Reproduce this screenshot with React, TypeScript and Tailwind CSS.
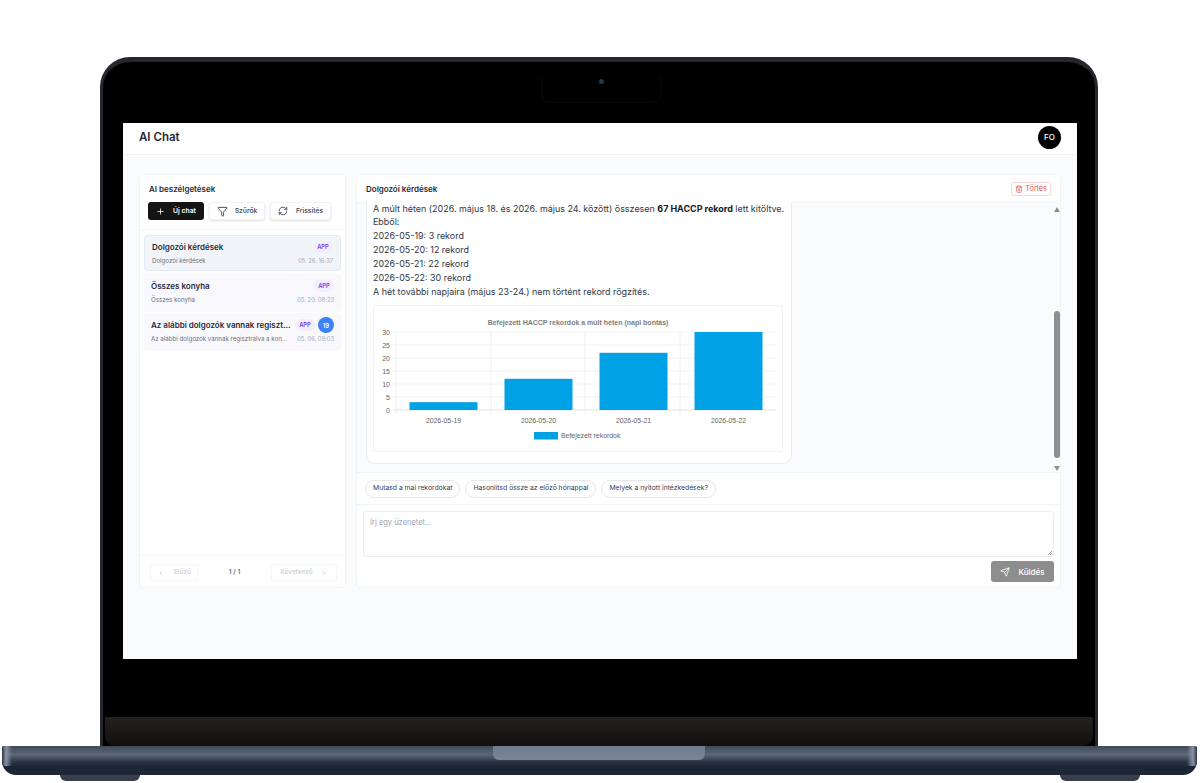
import { ChevronLeft, ChevronRight, Filter, Plus, RefreshCw, Send, Trash2 } from 'lucide-react';

const font = { fontFamily: 'Inter, "Liberation Sans", sans-serif' };

const conversations = [
  { title: 'Dolgozói kérdések', preview: 'Dolgozói kérdések', date: '05. 26. 16:37', active: true },
  { title: 'Összes konyha', preview: 'Összes konyha', date: '05. 20. 08:23' },
  {
    title: 'Az alábbi dolgozók vannak regiszt...',
    preview: 'Az alábbi dolgozók vannak regisztrálva a kon...',
    date: '05. 06. 09:03',
    count: 19,
  },
];

const bars = [
  { label: '2026-05-19', value: 3, x: 35.5 },
  { label: '2026-05-20', value: 12, x: 130.5 },
  { label: '2026-05-21', value: 22, x: 225.5 },
  { label: '2026-05-22', value: 30, x: 320.5 },
];

const suggestions = ['Mutasd a mai rekordokat', 'Hasonlítsd össze az előző hónappal', 'Melyek a nyitott intézkedések?'];

function HaccpChart() {
  const top = 26;
  const bottom = 104;
  const y = (v: number) => bottom - (v / 30) * (bottom - top);
  return (
    <svg width="408" height="145" viewBox="0 0 408 145" className="block">
      <g fontFamily='"Liberation Sans", Arial, sans-serif'>
        <text x="204" y="19" textAnchor="middle" fontSize="7" fontWeight="700" fill="#7d7d7d">
          Befejezett HACCP rekordok a múlt héten (napi bontás)
        </text>
        {[0, 5, 10, 15, 20, 25, 30].map((v) => (
          <g key={v}>
            <line x1="19" x2="402" y1={y(v)} y2={y(v)} stroke={v === 0 ? '#dcdcdc' : '#ececec'} strokeWidth="0.8" />
            <text x="16" y={y(v) + 2.6} textAnchor="end" fontSize="7" fill="#666">
              {v}
            </text>
          </g>
        ))}
        {[22, 117, 211, 306].map((x) => (
          <line key={x} x1={x} x2={x} y1={top} y2={bottom + 4} stroke="#ececec" strokeWidth="0.8" />
        ))}
        {bars.map((b) => (
          <g key={b.label}>
            <rect x={b.x} y={y(b.value)} width="68" height={bottom - y(b.value)} fill="#00a2e5" />
            <text x={b.x + 34} y="117" textAnchor="middle" fontSize="6.9" fill="#666">
              {b.label}
            </text>
          </g>
        ))}
        <rect x="160" y="126" width="24" height="7.5" fill="#00a2e5" />
        <text x="187" y="132" fontSize="6.9" fill="#666">
          Befejezett rekordok
        </text>
      </g>
    </svg>
  );
}

function ChatList() {
  return (
    <aside className="w-[207px] h-full shrink-0 flex flex-col bg-white rounded-[5px] border border-[#f1f4f7]">
      <div className="pl-[8px] pr-[9px] pt-[9px] h-[55px] border-b border-[#f1f4f7]">
        <h2 className="pl-[1px] text-[8px] leading-[10px] font-semibold text-[#1f2937]">AI beszélgetések</h2>
        <div className="mt-[8px] flex gap-[5px]">
          <button className="w-[56px] h-[18px] flex items-center justify-center gap-[8px] bg-[#141414] text-white rounded-[3px] text-[6.8px] font-semibold">
            <Plus className="w-[9px] h-[9px]" />
            Új chat
          </button>
          <button className="w-[56px] h-[18px] flex items-center justify-center gap-[7px] bg-white border border-[#f0f2f5] shadow-sm rounded-[3px] text-[6.8px] font-medium text-[#374151]">
            <Filter className="w-[11px] h-[11px]" />
            Szűrők
          </button>
          <button className="w-[61px] h-[18px] flex items-center justify-center gap-[8px] bg-white border border-[#f0f2f5] shadow-sm rounded-[3px] text-[6.8px] font-medium text-[#374151]">
            <RefreshCw className="w-[10px] h-[10px]" />
            Frissítés
          </button>
        </div>
      </div>
      <div className="flex-1 px-[4px] pt-[5px] flex flex-col gap-[3px]">
        {conversations.map((c) => (
          <div
            key={c.title}
            className={`h-[36px] rounded-[4px] pl-[7px] pr-[7px] flex flex-col justify-center gap-[4px] ${
              c.active ? 'bg-[#f1f5f9] border border-[#e2e8f0]' : 'bg-[#f9f8fd] shadow-sm shadow-[#f3f4f6]'
            }`}
          >
            <div className="flex items-center justify-between h-[12px]">
              <span className="text-[8px] font-semibold text-[#1f2937] whitespace-nowrap">{c.title}</span>
              <div className="flex items-center gap-[3px]">
                <span className="h-[12px] w-[20px] flex items-center justify-center rounded-full bg-[#f3edfd] text-[5.8px] font-semibold text-[#7c3aed]">
                  APP
                </span>
                {c.count && (
                  <span className="h-[16px] w-[16px] flex items-center justify-center rounded-full bg-[#3b82f6] text-[6px] font-semibold text-white">
                    {c.count}
                  </span>
                )}
              </div>
            </div>
            <div className="flex items-center justify-between">
              <span className="text-[6.15px] leading-[8px] text-[#6b7280] whitespace-nowrap">{c.preview}</span>
              <span className="text-[5.8px] leading-[8px] text-[#a3a9b3] whitespace-nowrap">{c.date}</span>
            </div>
          </div>
        ))}
      </div>
      <div className="h-[32px] border-t border-[#f1f4f7] pl-[10px] pr-[8px] pt-[2px] flex items-center justify-between">
        <button className="w-[48px] h-[17px] flex items-center justify-center gap-[9px] bg-white border border-[#f3f5f7] rounded-[3px] text-[6.6px] text-[#c3c8d0]">
          <ChevronLeft className="w-[8px] h-[8px]" />
          Előző
        </button>
        <span className="text-[6.6px] font-semibold text-[#6b7280]">1 / 1</span>
        <button className="w-[66px] h-[17px] flex items-center justify-center gap-[7px] bg-white border border-[#f3f5f7] rounded-[3px] text-[6.6px] text-[#c3c8d0]">
          Következő
          <ChevronRight className="w-[8px] h-[8px]" />
        </button>
      </div>
    </aside>
  );
}

function ChatPanel() {
  return (
    <section className="flex-1 h-full flex flex-col bg-white rounded-[5px] border border-[#f1f4f7] overflow-hidden">
      <div className="h-[28px] shrink-0 flex items-center justify-between pl-[9px] pr-[9px] border-b border-[#f3f4f6]">
        <h2 className="text-[8px] font-semibold text-[#1f2937]">Dolgozói kérdések</h2>
        <button className="w-[40px] h-[14px] flex items-center justify-center gap-[2px] bg-white border border-[#fbd5d5] rounded-[2px] text-[7.4px] text-[#d9534f]">
          <Trash2 className="w-[8px] h-[8px]" />
          Törlés
        </button>
      </div>
      <div className="h-[270px] shrink-0 flex bg-[#f9fbfc] border-b border-[#f1f4f7]">
        <div className="flex-1 pl-[9px]">
          <div className="w-[426px] h-[262px] bg-white rounded-b-[9px] border border-t-0 border-[#e8ebef] pl-[6px] pr-[6px]">
            <div className="-mt-[1.5px] text-[8.95px] leading-[13.85px] text-[#2f3744] whitespace-nowrap">
              <p>
                A múlt héten (2026. május 18. és 2026. május 24. között) összesen{' '}
                <strong className="font-bold text-[#111827]">67 HACCP rekord</strong> lett kitöltve.
              </p>
              <p>Ebből:</p>
              <p>2026-05-19: 3 rekord</p>
              <p>2026-05-20: 12 rekord</p>
              <p>2026-05-21: 22 rekord</p>
              <p>2026-05-22: 30 rekord</p>
              <p>A hét további napjaira (május 23-24.) nem történt rekord rögzítés.</p>
            </div>
            <div className="mt-[6.5px] w-[410px] h-[147px] bg-white border border-[#f0f1f3] rounded-[3px]">
              <HaccpChart />
            </div>
          </div>
        </div>
        <div className="w-[7px] flex flex-col items-center pt-[4px]">
          <span className="w-0 h-0 border-x-[3px] border-x-transparent border-b-[5px] border-b-[#8f8f8f]" />
          <div className="w-[6px] h-[147px] mt-[99px] rounded-full bg-[#8f8f8f]" />
          <span className="mt-[8px] w-0 h-0 border-x-[3px] border-x-transparent border-t-[5px] border-t-[#8f8f8f]" />
        </div>
      </div>
      <div className="h-[32px] shrink-0 flex items-center gap-[5px] pl-[8px] border-b border-[#f1f4f7]">
        {suggestions.map((s) => (
          <button
            key={s}
            className="h-[18px] px-[7px] rounded-full bg-white border border-[#e5e7eb] text-[6.8px] text-[#374151] whitespace-nowrap"
          >
            {s}
          </button>
        ))}
      </div>
      <div className="flex-1 pl-[6px] pr-[6px] pt-[6px]">
        <div className="relative h-[46px] rounded-[3px] border border-[#eceef1] pl-[6px] pt-[5px] text-[7.5px] text-[#9ca3af]">
          Írj egy üzenetet...
          <span className="absolute right-[1px] bottom-[1px] w-[4px] h-[4px] bg-[linear-gradient(135deg,transparent_50%,#9ca3af_50%,#9ca3af_60%,transparent_60%,transparent_75%,#9ca3af_75%,#9ca3af_85%,transparent_85%)]" />
        </div>
        <div className="mt-[4px] flex justify-end">
          <button className="w-[63px] h-[21px] flex items-center justify-center gap-[8px] bg-[#8d8d8d] rounded-[3px] text-[8px] font-medium text-white">
            <Send className="w-[10px] h-[10px]" />
            Küldés
          </button>
        </div>
      </div>
    </section>
  );
}

export default function App() {
  return (
    <div className="w-[1200px] h-[783px] bg-white overflow-hidden pt-[57px]" style={font}>
      {/* kijelző */}
      <div className="relative w-[998px] h-[689px] ml-[100px] rounded-t-[30px] border-x-[3px] border-t-[5px] border-[#24282e] bg-black overflow-hidden flex flex-col">
        <div className="absolute left-[438px] top-[16px] w-[120px] h-[25px] rounded-b-[8px] border-b border-x border-[#0a0b0d]">
          <span className="absolute left-[57px] top-[1px] w-[5px] h-[5px] rounded-full bg-[#1f3a52]" />
        </div>
        <div className="h-[61px] shrink-0" />
        <main className="w-[954px] h-[536px] ml-[20px] shrink-0 bg-[#f9fbfc] flex flex-col">
          <header className="h-[32px] shrink-0 bg-white border-b border-[#f1f4f7] flex items-center justify-between pl-[16px] pr-[16px] pb-[3px]">
            <h1 className="pt-[2px] text-[11.5px] font-semibold text-[#1f2937]">AI Chat</h1>
            <div className="w-[23px] h-[23px] rounded-full bg-black flex items-center justify-center text-[8px] font-medium text-white">
              FO
            </div>
          </header>
          <div className="h-[414px] mt-[19px] ml-[16px] mr-[16px] flex gap-[10px]">
            <ChatList />
            <ChatPanel />
          </div>
        </main>
        <div className="h-[58px] shrink-0" />
        <div className="h-[29px] shrink-0 mx-[2px] rounded-b-[10px] bg-[linear-gradient(180deg,#24221f,#110f0d)]" />
      </div>
      {/* alaplap */}
      <div className="relative w-[1195px] h-[29px] ml-[2px] rounded-b-[14px] rounded-t-[2px] overflow-hidden bg-[linear-gradient(180deg,#3e4959_0%,#5d6877_30%,#2a3444_55%,#1a2432_72%,#1e2837_100%)]">
        <div className="absolute left-0 top-0 w-[10px] h-[20px] bg-[linear-gradient(90deg,#2a3444,#8a93a3_40%,transparent)]" />
        <div className="absolute right-0 top-0 w-[10px] h-[20px] bg-[linear-gradient(270deg,#2a3444,#8a93a3_40%,transparent)]" />
        <div className="absolute left-[491px] top-0 w-[212px] h-[14px] rounded-b-[6px] bg-[linear-gradient(180deg,#6f7a8c,#7a8699)]" />
      </div>
      <div className="w-[1080px] ml-[60px] flex justify-between">
        <span className="w-[80px] h-[6px] rounded-b-[8px] bg-[#3a3f4c]" />
        <span className="w-[80px] h-[6px] rounded-b-[8px] bg-[#3a3f4c]" />
      </div>
    </div>
  );
}
